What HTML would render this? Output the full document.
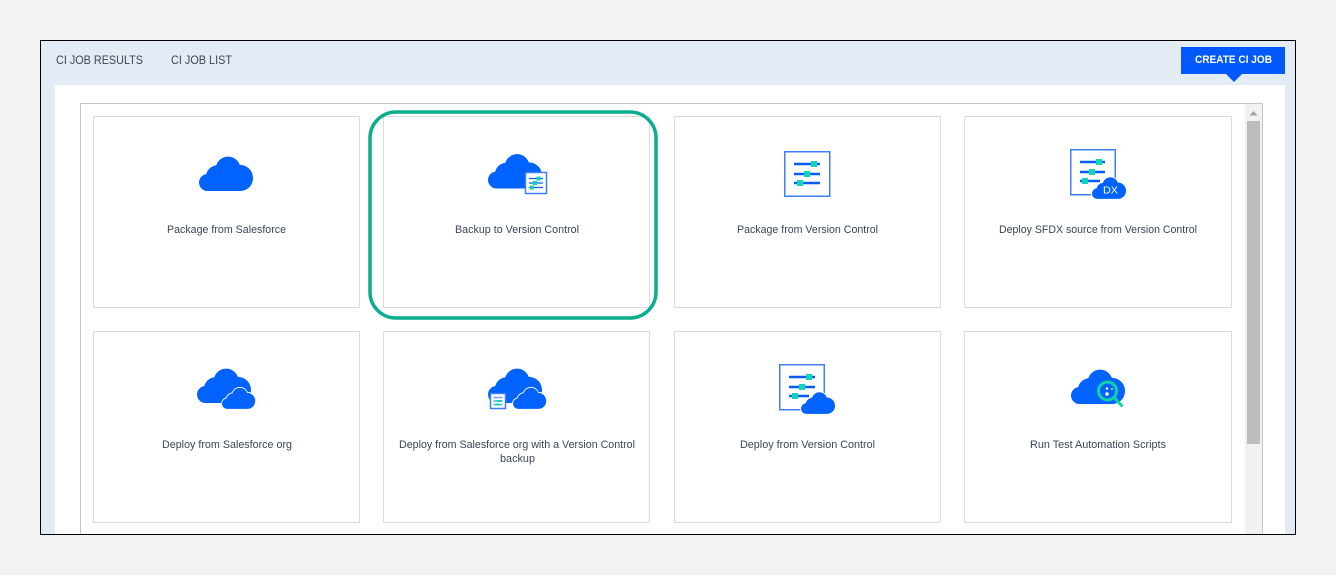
<!DOCTYPE html>
<html lang="en">
<head>
<meta charset="utf-8">
<title>CI Jobs</title>
<style>
html,body{margin:0;padding:0;background:#f2f2f2;width:1336px;height:575px;overflow:hidden}
svg{display:block}
text{font-family:"Liberation Sans",sans-serif}
.t{font-size:11px;fill:#394556}
.n{font-size:12px;fill:#3a4658}
.c{fill:#fff;stroke:#dcdcdc;stroke-width:1}
.b{fill:#0062ff}
.o{fill:#fff;stroke:#fff;stroke-width:3}
.d{fill:#fff;stroke:#3f7fff;stroke-width:1.5}
.l{stroke:#0b5cf5;stroke-width:2.5}
.h{fill:#0fd6b8}
</style>
</head>
<body>
<svg width="1336" height="575" viewBox="0 0 1336 575" xmlns="http://www.w3.org/2000/svg">
<defs>
<path id="cloud" d="M8.500 34A8.500 8.500 0 0 1 7.200 17.100A12 12 0 0 1 17.300 8.300A12.400 12.400 0 0 1 40.800 7.900A13 13 0 0 1 54 21.200A12.800 12.800 0 0 1 41.200 34Z"/>
</defs>
<rect x="40.500" y="40.500" width="1255" height="494" fill="#e3ebf4" stroke="#000"/>
<rect x="55" y="85" width="1230" height="449" fill="#fff"/>
<text class="n" x="56" y="64" textLength="87" lengthAdjust="spacingAndGlyphs">CI JOB RESULTS</text>
<text class="n" x="171" y="64" textLength="61" lengthAdjust="spacingAndGlyphs">CI JOB LIST</text>
<rect x="1181" y="47" width="104" height="27" fill="#0059ff"/>
<path d="M1226 74h16l-8 8z" fill="#0059ff"/>
<text x="1195" y="63" textLength="77" lengthAdjust="spacingAndGlyphs" font-size="11" font-weight="700" fill="#fff">CREATE CI JOB</text>
<path d="M80.500 534V103.500H1262.500V534" fill="none" stroke="#c6c6c6"/>
<rect x="1245" y="104" width="17" height="430" fill="#f1f1f1"/>
<path d="M1262.500 103.500V534" stroke="#c6c6c6"/>
<path d="M1253.500 111l4 4.500h-8z" fill="#a3a3a3"/>
<rect x="1247" y="121" width="13" height="323" fill="#bdbdbd"/>

<rect class="c" x="93.500" y="116.500" width="266" height="191"/>
<rect class="c" x="383.500" y="116.500" width="266" height="191"/>
<rect class="c" x="674.500" y="116.500" width="266" height="191"/>
<rect class="c" x="964.500" y="116.500" width="267" height="191"/>
<rect class="c" x="93.500" y="331.500" width="266" height="191"/>
<rect class="c" x="383.500" y="331.500" width="266" height="191"/>
<rect class="c" x="674.500" y="331.500" width="266" height="191"/>
<rect class="c" x="964.500" y="331.500" width="267" height="191"/>

<rect x="370" y="112" width="286" height="206" rx="26" fill="none" stroke="#0aae8e" stroke-width="3.500"/>

<!-- Row 1 icons -->
<use href="#cloud" class="b" x="199" y="157"/>

<use href="#cloud" class="b" x="488" y="154.500"/>
<rect class="d" x="525.500" y="172.500" width="21" height="21"/>
<path d="M529 178.500h14M529 183h14M529 187.500h14" stroke="#0b5cf5" stroke-width="1.200"/>
<rect class="h" x="536.500" y="176.500" width="4" height="4"/><rect class="h" x="533" y="181" width="4" height="4"/><rect class="h" x="530" y="185.500" width="4" height="4"/>

<rect class="d" x="784.750" y="151.750" width="45" height="44.500"/>
<path class="l" d="M794 164h26M794 174h26M794 183h26"/>
<rect class="h" x="811" y="161" width="6" height="6"/><rect class="h" x="804" y="171" width="6" height="6"/><rect class="h" x="797" y="180" width="6" height="6"/>

<rect class="d" x="1070.750" y="149.750" width="44.500" height="45"/>
<path class="l" d="M1080 162h25M1080 172h25M1080 181h20"/>
<rect class="h" x="1096" y="159" width="6" height="6"/><rect class="h" x="1089" y="169" width="6" height="6"/><rect class="h" x="1082" y="178" width="6" height="6"/>
<g transform="translate(1092 177.500) scale(.63)"><use href="#cloud" class="o"/><use href="#cloud" class="b"/></g>
<text x="1103" y="193.500" font-size="10" fill="#fff" textLength="15" lengthAdjust="spacingAndGlyphs">DX</text>

<!-- Row 2 icons -->
<use href="#cloud" class="b" x="197" y="369"/>
<g transform="translate(222 388) scale(.615)"><use href="#cloud" class="o"/><use href="#cloud" class="b"/></g>

<use href="#cloud" class="b" x="488" y="369"/>
<g transform="translate(513 388) scale(.615)"><use href="#cloud" class="o"/><use href="#cloud" class="b"/></g>
<rect class="d" x="490.500" y="393.500" width="15" height="15"/>
<path d="M493.500 397.500h9M493.500 401h9M493.500 404.500h9" stroke="#6f9fe8" stroke-width="1.500"/>
<rect class="h" x="497" y="400" width="5" height="2"/><rect class="h" x="495" y="403.500" width="5" height="2"/>

<rect class="d" x="779.750" y="364.750" width="44.500" height="45"/>
<path class="l" d="M789 377h26M789 387h26M789 396h20"/>
<rect class="h" x="806" y="374" width="6" height="6"/><rect class="h" x="799" y="384" width="6" height="6"/><rect class="h" x="792" y="393" width="6" height="6"/>
<g transform="translate(801 392.500) scale(.63)"><use href="#cloud" class="o"/><use href="#cloud" class="b"/></g>

<use href="#cloud" class="b" x="1071" y="370"/>
<circle cx="1107.500" cy="391" r="9" fill="#0062ff" stroke="#10d2a4" stroke-width="3"/>
<path d="M1114 397.500l8.500 9" stroke="#10d2a4" stroke-width="3"/>
<circle cx="1107" cy="394" r="1.800" fill="#fff"/><circle cx="1107" cy="388.500" r="1.300" fill="#fff"/><circle cx="1112" cy="389" r="1" fill="#cfe0ff"/>

<!-- Labels -->
<text class="t" x="167" y="233" textLength="119" lengthAdjust="spacingAndGlyphs">Package from Salesforce</text>
<text class="t" x="455" y="233" textLength="124" lengthAdjust="spacingAndGlyphs">Backup to Version Control</text>
<text class="t" x="737" y="233" textLength="141" lengthAdjust="spacingAndGlyphs">Package from Version Control</text>
<text class="t" x="999" y="233" textLength="198" lengthAdjust="spacingAndGlyphs">Deploy SFDX source from Version Control</text>
<text class="t" x="162" y="448" textLength="130" lengthAdjust="spacingAndGlyphs">Deploy from Salesforce org</text>
<text class="t" x="399" y="448" textLength="236" lengthAdjust="spacingAndGlyphs">Deploy from Salesforce org with a Version Control</text>
<text class="t" x="500" y="462" textLength="35" lengthAdjust="spacingAndGlyphs">backup</text>
<text class="t" x="740" y="448" textLength="135" lengthAdjust="spacingAndGlyphs">Deploy from Version Control</text>
<text class="t" x="1030" y="448" textLength="136" lengthAdjust="spacingAndGlyphs">Run Test Automation Scripts</text>
</svg>
</body>
</html>
